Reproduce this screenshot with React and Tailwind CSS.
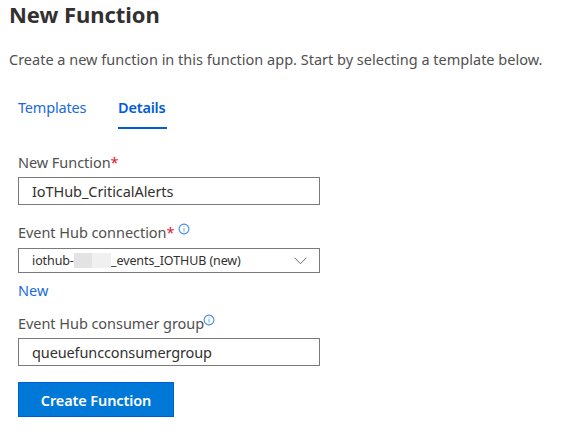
function InfoIcon({ className }) {
  return (
    <svg className={className} width="12" height="12" viewBox="0 0 12 12" fill="none">
      <circle cx="6" cy="6" r="4.9" stroke="#3f8cf0" strokeWidth="1.1" />
      <path d="M6 5.1V8.6" stroke="#6ea8f4" strokeWidth="1" />
      <path d="M6 3.3V4.3" stroke="#6ea8f4" strokeWidth="1" />
    </svg>
  );
}

function Label({ children }) {
  return <div className="flex h-5 items-center text-[14.5px] leading-5 tracking-[-0.05px] text-[#505050]">{children}</div>;
}

export default function App() {
  return (
    <main className="h-[439px] w-[566px] overflow-hidden bg-white font-['Noto_Sans',sans-serif] whitespace-nowrap">
      <h1 className="pl-[9px] text-[22px] leading-[29px] font-bold tracking-[-0.05px] text-[#323130]">
        <span>New Function</span>
      </h1>
      <p className="mt-5 pl-[9px] text-[14.5px] leading-5 text-[#505050]">
        <span>Create a new function in this function app. Start by selecting a template below.</span>
      </p>

      <div className="pl-[18px]">
        <nav className="mt-7 flex h-8 text-[14.5px] leading-5 tracking-[-0.2px]">
          <a className="w-[100px] text-[#1a6ae0]"><span>Templates</span></a>
          <a className="w-[49px] border-b-2 border-[#015cda] font-semibold text-[#015cda]"><span>Details</span></a>
        </nav>

        <div className="mt-[23px]">
          <Label>
            <span>New Function</span>
            <span className="text-[#e81123]">*</span>
          </Label>
        </div>
        <div className="mt-[5px] flex h-7 w-[302px] items-center border border-[#7a7a7a] pt-0.5 pl-[13px] text-[14.5px] tracking-[-0.07px] text-[#323130]">
          <span>IoTHub_CriticalAlerts</span>
        </div>

        <div className="mt-[17px]">
          <Label>
            <span>Event Hub connection</span>
            <span className="text-[#e81123]">*</span>
            <InfoIcon className="mb-[6px] ml-1" />
          </Label>
        </div>
        <div className="mt-[6px] flex h-[25px] w-[302px] items-center border border-[#7a7a7a] pl-[13px] text-[12.5px] tracking-[-0.1px] text-[#323130]">
          <span className="w-[42px] pt-0.5">iothub-</span>
          <span className="h-[15px] w-[18px] bg-[#e3e3e3]" />
          <span className="h-[15px] w-[19px] bg-[#f0f0f0]" />
          <span className="pt-0.5">_events_IOTHUB (new)</span>
          <svg className="mt-px mr-3 ml-auto" width="13" height="8" viewBox="0 0 13 8" fill="none">
            <path d="M0.5 0.7L6.5 6.7L12.5 0.7" stroke="#6a6a6a" />
          </svg>
        </div>

        <a className="mt-[7px] block text-[14.5px] leading-5 text-[#1a6ae0]"><span>New</span></a>

        <div className="mt-[13px]">
          <Label>
            <span>Event Hub consumer group</span>
            <InfoIcon className="mb-[6px] -ml-px" />
          </Label>
        </div>
        <div className="mt-[5px] flex h-7 w-[302px] items-center border border-[#7a7a7a] pt-0.5 pl-[13px] text-[14.5px] tracking-[-0.12px] text-[#323130]">
          <span>queuefuncconsumergroup</span>
        </div>

        <button className="mt-4 flex h-[35px] w-[156px] items-center justify-center border border-[#015cda] bg-[#0078d7] pt-0.5 text-[14.5px] font-semibold tracking-[-0.12px] text-white">
          <span>Create Function</span>
        </button>
      </div>
    </main>
  );
}
